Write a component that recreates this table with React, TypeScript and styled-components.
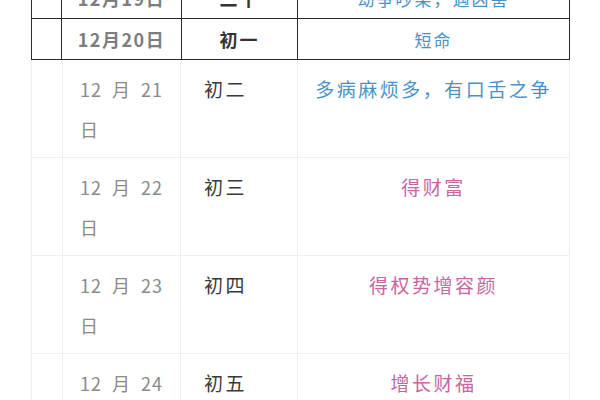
import React from 'react';
import styled, { createGlobalStyle } from 'styled-components';

const GlobalStyle = createGlobalStyle`
  html, body {
    margin: 0;
    padding: 0;
    background: #fff;
  }
  body {
    font-family: "Noto Sans CJK SC", "Noto Sans", sans-serif;
  }
`;

const Page = styled.div`
  width: 600px;
  height: 400px;
  overflow: hidden;
  padding: 0 31px;
  box-sizing: border-box;
`;

// 页面向上滚动了一部分，第一行只露出下半截
const Scroller = styled.div`
  margin-top: -23px;
`;

const cols = '30px 120px 116px 272px';

const HeadTable = styled.div`
  display: grid;
  grid-template-columns: ${cols};
  border-top: 1px solid #2a2a2a;
  border-left: 1px solid #2a2a2a;
`;

const HeadCell = styled.div<{ $kind?: 'date' | 'lunar' | 'mean' }>`
  box-sizing: border-box;
  height: 41px;
  border-right: 1px solid #2a2a2a;
  border-bottom: 1px solid #2a2a2a;
  display: flex;
  align-items: center;
  justify-content: center;
  font-size: ${(p) => (p.$kind === 'mean' ? '17px' : '18px')};
  font-weight: ${(p) => (p.$kind === 'mean' || !p.$kind ? 400 : 700)};
  letter-spacing: ${(p) => (p.$kind === 'date' ? '1.5px' : '2px')};
  color: ${(p) =>
    p.$kind === 'date' ? '#7d7d7d' : p.$kind === 'lunar' ? '#333' : '#4a92c6'};
`;

const BodyTable = styled.div`
  display: grid;
  grid-template-columns: 31px 118px 117px 272px;
  border-left: 1px solid #efefef;
`;

const BodyCell = styled.div<{ $kind?: 'date' | 'lunar' | 'mean'; $tone?: 'blue' | 'pink' }>`
  box-sizing: border-box;
  height: 98px;
  padding-top: 9px;
  padding-left: ${(p) => (p.$kind === 'date' ? '17px' : p.$kind === 'lunar' ? '23px' : '0')};
  border-right: 1px solid #efefef;
  border-bottom: 1px solid #efefef;
  font-size: ${(p) => (p.$kind === 'date' ? '18px' : '19px')};
  line-height: 40px;
  text-align: ${(p) => (p.$kind === 'mean' ? 'center' : 'left')};
  letter-spacing: ${(p) => (p.$kind === 'date' ? '1px' : '2.5px')};
  color: ${(p) =>
    p.$kind === 'date'
      ? '#8a8a8a'
      : p.$kind === 'lunar'
      ? '#3a3a3a'
      : p.$tone === 'pink'
      ? '#c966a2'
      : '#4a92c6'};
`;

const DateText = styled.div`
  width: 90px;
  word-spacing: 5px;
`;

interface Row {
  day: number;
  lunar: string;
  mean: string;
  tone: 'blue' | 'pink';
}

const headRows = [
  { date: '12月19日', lunar: '二十', mean: '劫争吵架，遇凶害' },
  { date: '12月20日', lunar: '初一', mean: '短命' }
];

const rows: Row[] = [
  { day: 21, lunar: '初二', mean: '多病麻烦多，有口舌之争', tone: 'blue' },
  { day: 22, lunar: '初三', mean: '得财富', tone: 'pink' },
  { day: 23, lunar: '初四', mean: '得权势增容颜', tone: 'pink' },
  { day: 24, lunar: '初五', mean: '增长财福', tone: 'pink' }
];

export default function App() {
  return (
    <Page>
      <GlobalStyle />
      <Scroller>
        {/* 深色边框的表格 */}
        <HeadTable>
          {headRows.map((r) => (
            <React.Fragment key={r.date}>
              <HeadCell />
              <HeadCell $kind="date">{r.date}</HeadCell>
              <HeadCell $kind="lunar">{r.lunar}</HeadCell>
              <HeadCell $kind="mean">{r.mean}</HeadCell>
            </React.Fragment>
          ))}
        </HeadTable>
        {/* 浅色边框的表格 */}
        <BodyTable>
          {rows.map((r) => (
            <React.Fragment key={r.day}>
              <BodyCell />
              <BodyCell $kind="date">
                <DateText>12 月 {r.day} 日</DateText>
              </BodyCell>
              <BodyCell $kind="lunar">{r.lunar}</BodyCell>
              <BodyCell $kind="mean" $tone={r.tone}>
                {r.mean}
              </BodyCell>
            </React.Fragment>
          ))}
        </BodyTable>
      </Scroller>
    </Page>
  );
}
